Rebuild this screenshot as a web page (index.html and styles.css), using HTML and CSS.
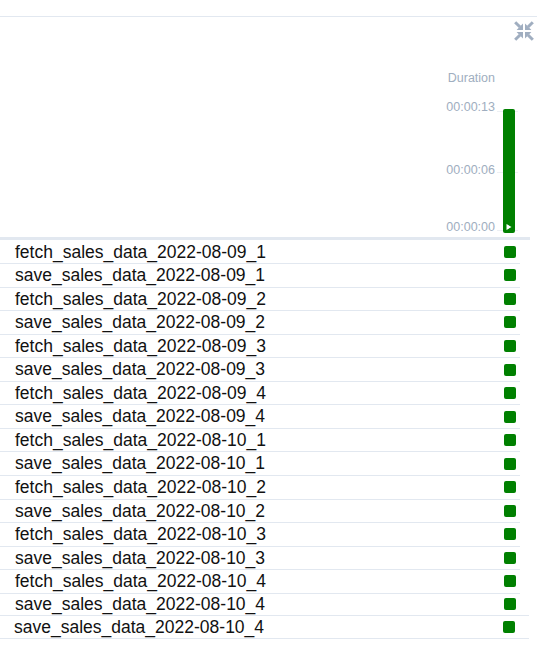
FILE: index.html
```html
<!DOCTYPE html>
<html>
<head>
<meta charset="utf-8">
<link rel="stylesheet" href="styles.css">
</head>
<body>
<div class="topline"></div>
<div class="header">
  <svg class="collapse-icon" viewBox="0 0 20 20" width="20" height="20" aria-hidden="true">
    <g fill="#a0aec0" stroke="#a0aec0">
      <line x1="1.2" y1="1.2" x2="6" y2="6" stroke-width="3"/>
      <polygon points="9,2.6 9,9 2.6,9" stroke="none"/>
      <line x1="18.8" y1="1.2" x2="14" y2="6" stroke-width="3"/>
      <polygon points="11,2.6 11,9 17.4,9" stroke="none"/>
      <line x1="1.2" y1="18.8" x2="6" y2="14" stroke-width="3"/>
      <polygon points="9,17.4 9,11 2.6,11" stroke="none"/>
      <line x1="18.8" y1="18.8" x2="14" y2="14" stroke-width="3"/>
      <polygon points="11,17.4 11,11 17.4,11" stroke="none"/>
    </g>
  </svg>
  <div class="duration-title">Duration</div>
  <div class="chart">
    <span class="tick-label" style="top:0px">00:00:13</span>
    <span class="tick-line" style="top:11px"></span>
    <span class="tick-label" style="top:63px">00:00:06</span>
    <span class="tick-line" style="top:72px"></span>
    <span class="tick-label" style="top:120px">00:00:00</span>
    <span class="tick-line" style="top:130px"></span>
    <div class="bar" style="top:9px;height:124px">
      <svg class="play" viewBox="0 0 6 6" width="6" height="6"><polygon points="0.5,0 5.5,3 0.5,6" fill="#fff"/></svg>
    </div>
  </div>
</div>
<div class="separator"></div>
<div class="rows">
  <div class="row"><span class="name">fetch_sales_data_2022-08-09_1</span><span class="status"></span></div>
  <div class="row"><span class="name">save_sales_data_2022-08-09_1</span><span class="status"></span></div>
  <div class="row"><span class="name">fetch_sales_data_2022-08-09_2</span><span class="status"></span></div>
  <div class="row"><span class="name">save_sales_data_2022-08-09_2</span><span class="status"></span></div>
  <div class="row"><span class="name">fetch_sales_data_2022-08-09_3</span><span class="status"></span></div>
  <div class="row"><span class="name">save_sales_data_2022-08-09_3</span><span class="status"></span></div>
  <div class="row"><span class="name">fetch_sales_data_2022-08-09_4</span><span class="status"></span></div>
  <div class="row"><span class="name">save_sales_data_2022-08-09_4</span><span class="status"></span></div>
  <div class="row"><span class="name">fetch_sales_data_2022-08-10_1</span><span class="status"></span></div>
  <div class="row"><span class="name">save_sales_data_2022-08-10_1</span><span class="status"></span></div>
  <div class="row"><span class="name">fetch_sales_data_2022-08-10_2</span><span class="status"></span></div>
  <div class="row"><span class="name">save_sales_data_2022-08-10_2</span><span class="status"></span></div>
  <div class="row"><span class="name">fetch_sales_data_2022-08-10_3</span><span class="status"></span></div>
  <div class="row"><span class="name">save_sales_data_2022-08-10_3</span><span class="status"></span></div>
  <div class="row"><span class="name">fetch_sales_data_2022-08-10_4</span><span class="status"></span></div>
  <div class="row row-wide"><span class="name">save_sales_data_2022-08-10_4</span><span class="status"></span></div>
  <div class="row row-last"><span class="name">save_sales_data_2022-08-10_4</span><span class="status"></span></div>
</div>
</body>
</html>
```
FILE: styles.css
```css
html, body {
  margin: 0;
  padding: 0;
  background: #ffffff;
}
body {
  font-family: "Liberation Sans", Arial, sans-serif;
  width: 537px;
  overflow: hidden;
}
.topline {
  margin-top: 16px;
  height: 1px;
  background: #e2e8f0;
}
.header {
  height: 220px;
  display: flex;
  flex-direction: column;
  align-items: flex-end;
}
.collapse-icon {
  display: block;
  margin-top: 4px;
  margin-right: 3px;
}
.duration-title {
  margin-top: 30px;
  margin-right: 42px;
  font-size: 12.5px;
  line-height: 15px;
  color: #a0aec0;
}
.chart {
  position: relative;
  margin-top: 14px;
  margin-right: 17px;
  width: 90px;
  height: 136px;
}
.tick-label {
  position: absolute;
  right: 25px;
  font-size: 12.5px;
  line-height: 14px;
  color: #a0aec0;
  white-space: nowrap;
}
.tick-line {
  position: absolute;
  left: 67px;
  width: 21px;
  height: 1px;
  background: #edf0f4;
}
.bar {
  position: absolute;
  left: 73px;
  width: 12px;
  background: #008000;
  border-radius: 2px;
}
.play {
  position: absolute;
  left: 3px;
  bottom: 3px;
}
.separator {
  height: 3px;
  width: 530px;
  background: #e2e8f0;
}
.rows {
  width: 520px;
  padding-top: 0.5px;
}
.row {
  height: 22.55px;
  border-bottom: 1px solid #e2e8f0;
  display: flex;
  align-items: center;
  justify-content: space-between;
  padding-left: 15px;
  padding-right: 4px;
}
.row-wide {
  width: 529px;
  box-sizing: border-box;
  padding-right: 13px;
}
.row-last {
  width: 529px;
  box-sizing: border-box;
  padding-left: 14px;
  padding-right: 14px;
}
.name {
  font-size: 17.5px;
  line-height: 22.5px;
  color: #111111;
  white-space: nowrap;
}
.status {
  width: 12px;
  height: 12px;
  border-radius: 2px;
  background: #008000;
}
```
